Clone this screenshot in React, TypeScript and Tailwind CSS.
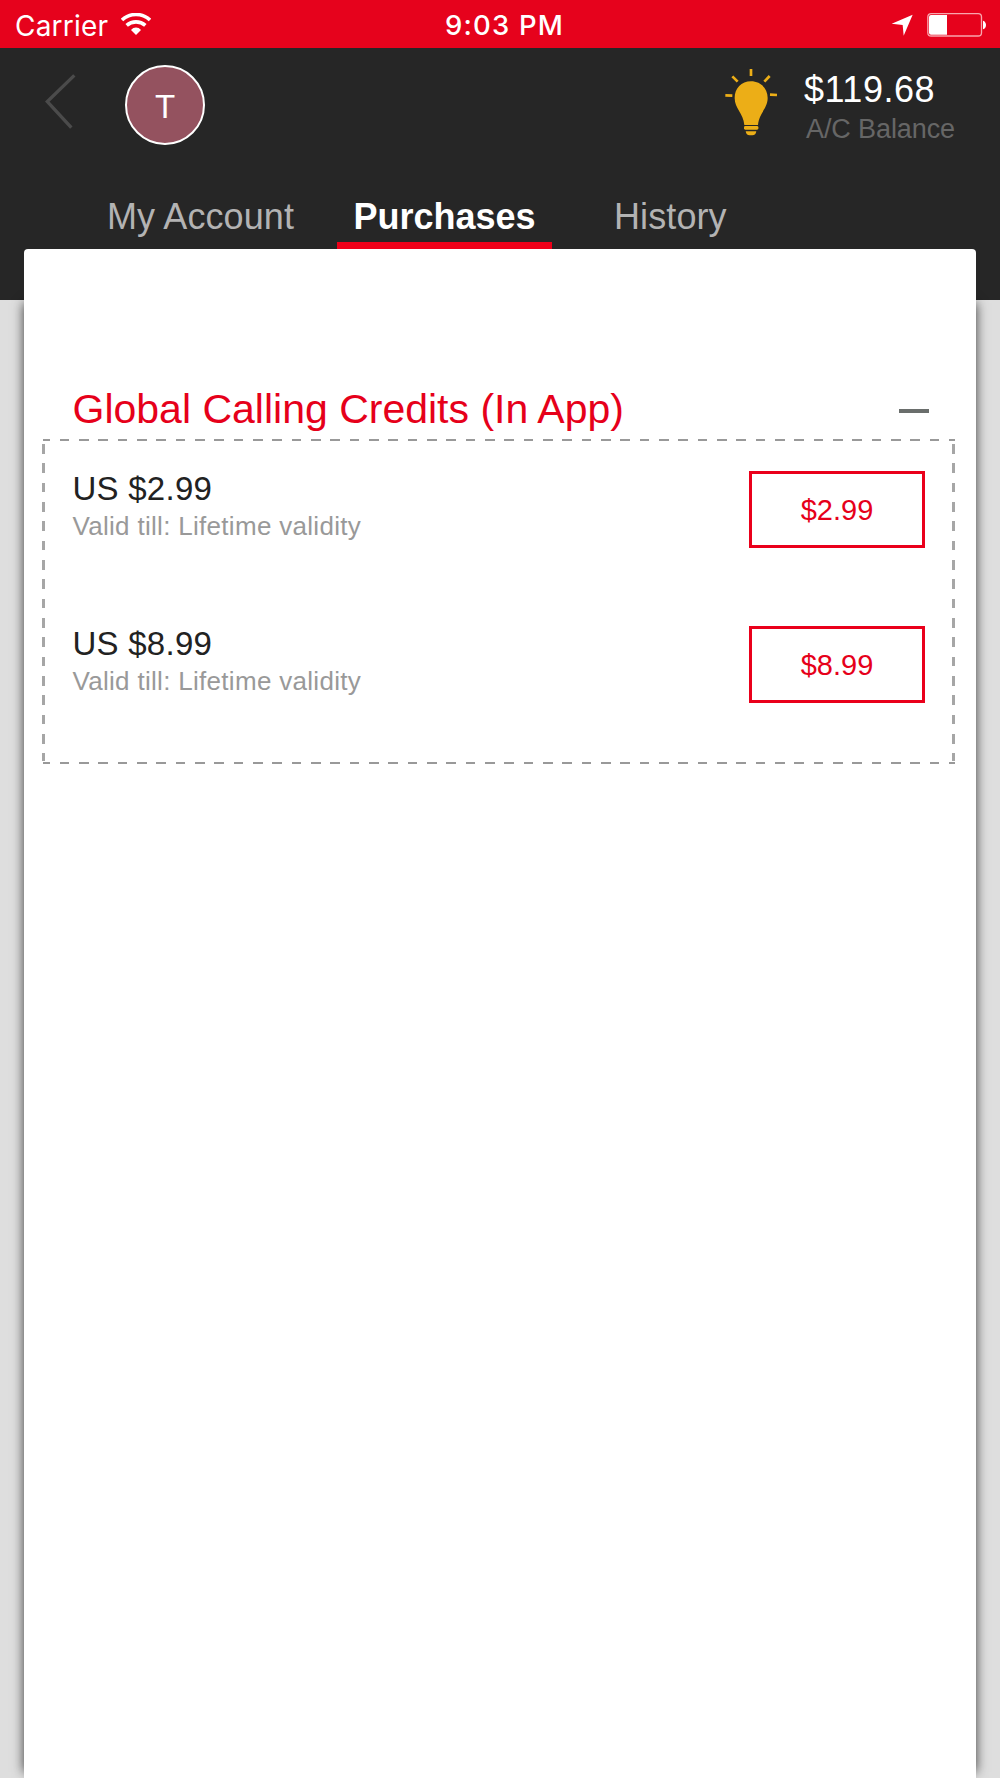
import React from 'react';

const tabs = [
  { label: 'My Account', className: 'ml-[107px] w-[189px] tracking-[0.1px] text-[#b3b3b3]' },
  { label: 'Purchases', className: 'ml-[41px] w-[215px] text-center font-bold text-white' },
  { label: 'History', className: 'ml-[62px] w-[115px] tracking-[0.1px] text-[#b3b3b3]' }
];

const credits = [
  { title: 'US $2.99', validity: 'Valid till: Lifetime validity', price: '$2.99' },
  { title: 'US $8.99', validity: 'Valid till: Lifetime validity', price: '$8.99' }
];

function WifiIcon() {
  return (
    <svg className="ml-[12px] mt-[13px] h-[22px] w-[30px]" viewBox="0 0 90 66" fill="none">
      <path d="M3 21 C27 -1 63 -1 87 21" stroke="white" strokeWidth="11" />
      <path d="M17 37 C33 23 57 23 73 37" stroke="white" strokeWidth="11" />
      <path d="M30 51 C38 41 52 41 60 51 L45 66 Z" fill="white" />
    </svg>
  );
}

function BulbIcon() {
  return (
    <svg className="ml-[725px] mt-[18.5px] h-[70px] w-[54px]" viewBox="75 200 162 210">
      <path
        d="M153 243 C124 243 104 264 104 293 C104 325 130 338 133 374 H174 C177 338 203 325 203 293 C203 264 182 243 153 243 Z"
        fill="#ecae17"
      />
      <rect x="132" y="377" width="43" height="11" rx="4" fill="#ecae17" />
      <path d="M137 393 H169 C168 401 164 405 157 405 H149 C142 405 138 401 137 393 Z" fill="#ecae17" />
      <path
        d="M153 206 V227 M97 228 L113 244 M209 227 L193 244 M76 285 L97 286 M210 283 L231 284"
        stroke="#ecae17"
        strokeWidth="8"
      />
    </svg>
  );
}

function StatusBar() {
  return (
    <div className="relative flex h-[48px] bg-[#e6021c] font-['Inter',sans-serif] text-white">
      <span className="ml-[15px] mt-[2px] w-[94px] whitespace-nowrap text-[28px] leading-[48px] tracking-[0.2px]">Carrier</span>
      <WifiIcon />
      <span className="ml-[294px] mt-px w-[120px] whitespace-nowrap text-[27.5px] font-medium leading-[48px] tracking-[1.2px]">
        9:03 PM
      </span>
      <svg className="absolute left-[890px] top-[12px] h-[26px] w-[98px]" viewBox="570 36 294 78">
        <path d="M575 71 L638 44 L611 107 L608 75 Z" fill="white" />
        <rect x="683.5" y="41" width="161" height="67" rx="10" fill="none" stroke="#f9a5ad" strokeWidth="4" />
        <path d="M693 45 H741 V104 H693 Q687 104 687 98 V51 Q687 45 693 45 Z" fill="white" />
        <path d="M849 62 C861 65 861 85 849 88 Z" fill="white" />
      </svg>
    </div>
  );
}

function Header() {
  return (
    <div className="h-[252px] bg-[#262626]">
      <div className="relative flex h-[136px]">
        <svg className="absolute left-[44px] top-[24px] h-[58px] w-[34px]" viewBox="132 216 102 174" fill="none">
          <path d="M223 226 L142 305 L214 383" stroke="#4b4b4b" strokeWidth="10" />
        </svg>
        <div className="absolute left-[125px] top-[17px] flex h-[80px] w-[80px] items-center justify-center rounded-full border-2 border-white bg-[#94525f] pt-[3px] text-[33px] leading-[40px] text-white">
          T
        </div>
        <BulbIcon />
        <div className="ml-[25px] mt-[20px] whitespace-nowrap">
          <div className="text-[36px] leading-[44px] tracking-[0.5px] text-white">$119.68</div>
          <div className="ml-[2px] text-[27px] leading-[34px] tracking-[-0.1px] text-[#666]">A/C Balance</div>
        </div>
      </div>
      <div className="flex h-[65px]">
        {tabs.map((tab) => (
          <div key={tab.label} className={`whitespace-nowrap text-[36px] leading-[65px] ${tab.className}`}>
            {tab.label}
            {tab.label === 'Purchases' && <div className="-mt-[7px] h-[7px] bg-[#ee0019]" />}
          </div>
        ))}
      </div>
    </div>
  );
}

function DashedFrame() {
  const horizontal =
    'absolute left-0 h-[2px] w-full bg-[repeating-linear-gradient(90deg,#999_0_7px,transparent_7px_16.67px,#999_16.67px_19.33px)]';
  const vertical =
    'absolute top-[5px] w-[3px] h-[317px] bg-[repeating-linear-gradient(180deg,#a6a6a6_0_9.67px,transparent_9.67px_19.33px)]';

  return (
    <>
      <div className={`${horizontal} top-0`} />
      <div className={`${horizontal} bottom-0`} />
      <div className={`${vertical} -left-px`} />
      <div className={`${vertical} right-0`} />
    </>
  );
}

export default function App() {
  return (
    <div className="h-[1778px] w-[1000px] overflow-hidden bg-[#dedede] font-['Liberation_Sans',Arial,sans-serif]">
      <StatusBar />
      <Header />
      <div className="relative mx-[24px] -mt-[51px] h-[1529px]">
        {/* side shadow starts below the dark header */}
        <div className="absolute inset-x-0 bottom-[6px] top-[54px] shadow-[0_0_11px_rgba(0,0,0,0.75)]" />
        <div className="relative h-full rounded-t-[4px] bg-white">
          <div className="flex h-[190px] items-end justify-between pl-[48.5px] pr-[47px]">
            <h1 className="whitespace-nowrap text-[41px] leading-[60px] text-[#e6001a]">Global Calling Credits (In App)</h1>
            <div className="mb-[26px] h-[4px] w-[30px] bg-[#6a6e6c]" />
          </div>
          <div className="relative ml-[19px] h-[325px] w-[912px] pt-[32px]">
            <DashedFrame />
            {credits.map((credit) => (
              <div key={credit.title} className="flex h-[155px] items-start justify-between pl-[29.5px] pr-[30px]">
                <div className="-mt-px whitespace-nowrap">
                  <div className="text-[33px] leading-[38px] tracking-[0.25px] text-[#222]">{credit.title}</div>
                  <div className="text-[26px] leading-[36px] tracking-[0.3px] text-[#999]">{credit.validity}</div>
                </div>
                <button className="h-[77px] w-[176px] border-[3px] border-[#ea001b] pt-px text-[29px] leading-[70px] text-[#e6001a]">
                  {credit.price}
                </button>
              </div>
            ))}
          </div>
        </div>
      </div>
    </div>
  );
}
